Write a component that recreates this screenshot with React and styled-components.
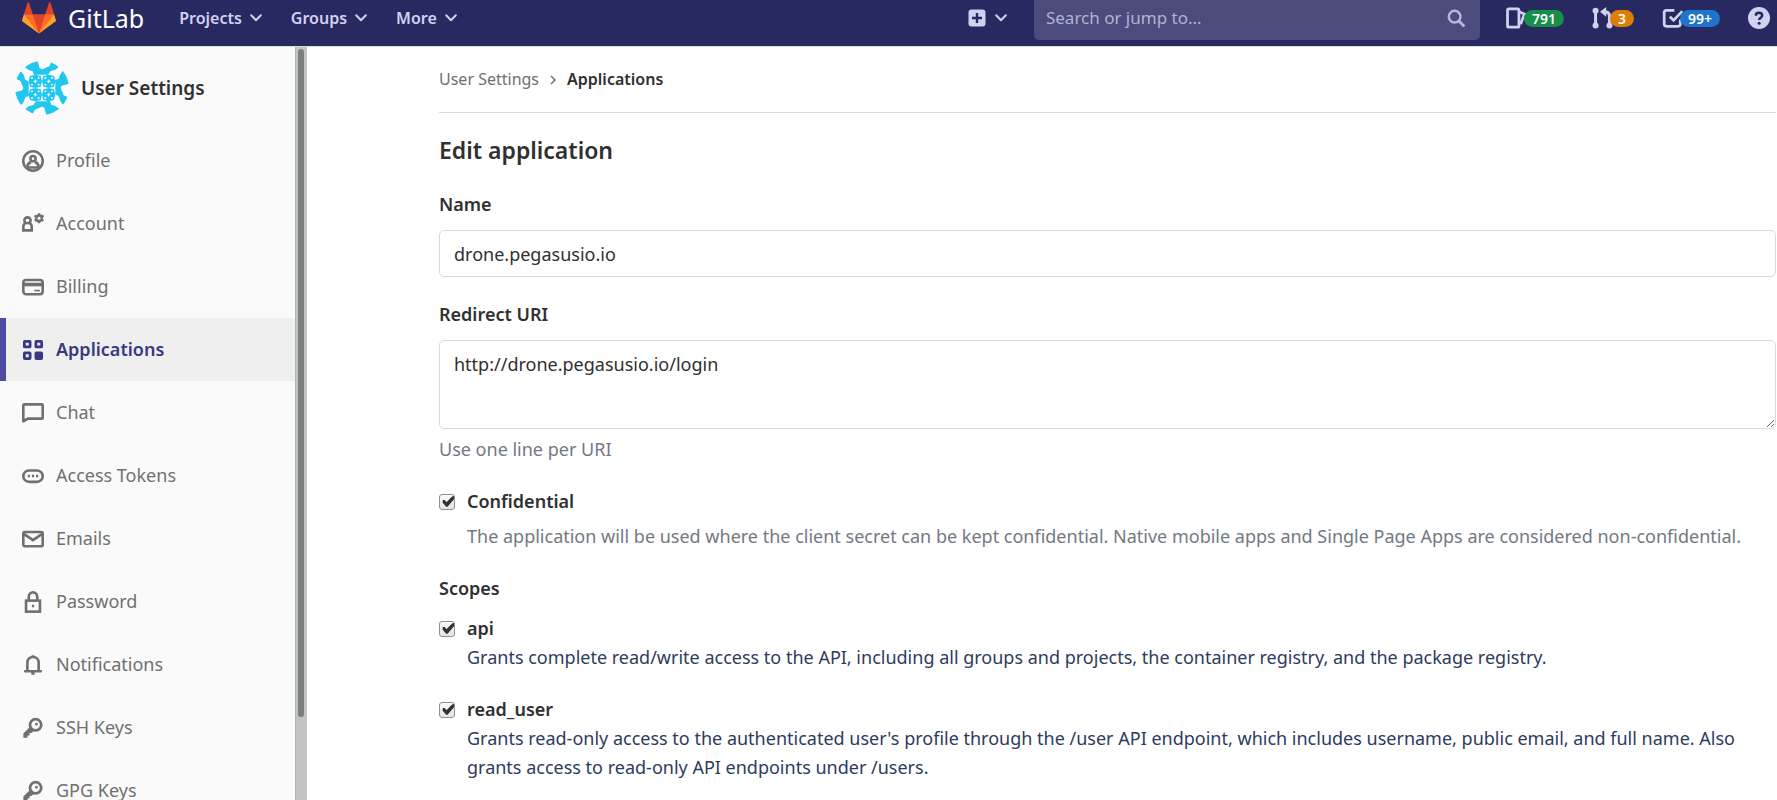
import React from "react";
import styled, { createGlobalStyle } from "styled-components";

const Global = createGlobalStyle`
  *, *::before, *::after { box-sizing: border-box; }
  body {
    margin: 0;
    background: #fff;
    color: #303030;
    font: 400 18px/29px "Noto Sans", sans-serif;
  }
  body, html { overflow: hidden; }
  button, input, textarea { font: inherit; }
`;

const Page = styled.div`
  display: flex;
  flex-direction: column;
  height: 100vh;
`;

/* ---------- Top bar ---------- */

const TopBar = styled.header`
  flex: none;
  display: flex;
  align-items: center;
  height: 47px;
  padding: 0 7px 10px 22px;
  background: #292961;
  border-bottom: 1px solid #dbdbdb;
`;

const Brand = styled.a`
  display: flex;
  align-items: center;
  gap: 12px;
  margin-right: 35px;
  color: #fff;
  font-size: 25px;
  text-decoration: none;
`;

const MainMenu = styled.nav`
  display: flex;
  gap: 29px;
`;

const MenuButton = styled.button`
  display: flex;
  align-items: center;
  gap: 8px;
  padding: 0;
  border: 0;
  background: none;
  color: #d1d1f0;
  font-size: 16px;
  font-weight: 600;
  line-height: 24px;
`;

const Tools = styled.div`
  display: flex;
  align-items: center;
  align-self: flex-start;
  margin-left: auto;
  height: 36px;
`;

const Search = styled.label`
  display: flex;
  align-items: center;
  align-self: flex-start;
  width: 446px;
  height: 40px;
  margin: 0 26px 0 27px;
  padding: 0 15px 4px 12px;
  border-radius: 0 0 5px 5px;
  background: #4c4b7d;
  color: #b8b7dc;
`;

const SearchInput = styled.input`
  flex: 1;
  min-width: 0;
  padding: 0;
  border: 0;
  outline: 0;
  background: none;
  color: inherit;
  font-size: 17px;
  line-height: 24px;
  &::placeholder { color: #b3b2d3; opacity: 1; }
`;

const Counters = styled.div`
  display: flex;
  align-items: center;
  gap: 28px;
`;

const Counter = styled.a`
  display: flex;
  align-items: center;
  color: #d1d1f0;
  text-decoration: none;
`;

const Badge = styled.span`
  margin-left: -4px;
  padding: 0 8px;
  border-radius: 9px;
  background: ${(p) => p.$color};
  color: #fff;
  font-size: 14px;
  font-weight: 600;
  line-height: 17px;
`;

/* ---------- Sidebar ---------- */

const Body = styled.div`
  flex: 1;
  min-height: 0;
  display: flex;
`;

const Sidebar = styled.aside`
  flex: none;
  width: 295px;
  overflow: hidden;
  background: #fafafa;
`;

const SidebarTitle = styled.a`
  display: flex;
  align-items: center;
  gap: 12px;
  height: 82px;
  padding-left: 15px;
  color: #303030;
  font-size: 19px;
  font-weight: 600;
  text-decoration: none;
`;

const SidebarLink = styled.a`
  display: flex;
  align-items: center;
  gap: 12px;
  height: 63px;
  padding-left: 16px;
  border-left: 6px solid ${(p) => (p.$active ? "#4b4ba3" : "transparent")};
  background: ${(p) => (p.$active ? "#efefef" : "none")};
  color: ${(p) => (p.$active ? "#393982" : "#707070")};
  font-weight: ${(p) => (p.$active ? 600 : 400)};
  text-decoration: none;
`;

const ScrollTrack = styled.div`
  flex: none;
  width: 12px;
  padding: 2px 3px 0 2px;
  border-left: 1px solid #b0b5b5;
  background: #c2c4c3;
`;

const ScrollThumb = styled.div`
  height: 89%;
  border-radius: 3px;
  background: #7a7e7e;
`;

/* ---------- Content ---------- */

const Content = styled.main`
  flex: 1;
  min-width: 0;
  overflow: hidden;
  padding: 0 1px 0 132px;
`;

const Breadcrumbs = styled.nav`
  display: flex;
  align-items: center;
  gap: 10px;
  height: 66px;
  border-bottom: 1px solid #dbdbdb;
  font-size: 16px;
  color: #707070;
`;

const Crumb = styled.a`
  color: ${(p) => (p.$current ? "#303030" : "#707070")};
  font-weight: ${(p) => (p.$current ? 600 : 400)};
  text-decoration: none;
`;

const Title = styled.h1`
  margin: 23px 0 25px;
  font-size: 23px;
  font-weight: 600;
  line-height: 29px;
`;

const Field = styled.div`
  display: flex;
  flex-direction: column;
  margin-bottom: 23px;
`;

const FieldLabel = styled.label`
  margin-bottom: 11px;
  font-weight: 600;
`;

const TextInput = styled.input`
  height: 47px;
  padding: 0 14px;
  border: 1px solid #dbdbdb;
  border-radius: 5px;
  background: #fff;
  color: #303030;
`;

const TextArea = styled.textarea`
  height: 89px;
  padding: 9px 14px;
  border: 1px solid #dbdbdb;
  border-radius: 5px;
  background: #fff;
  color: #303030;
`;

const Hint = styled.p`
  margin: 6px 0 0;
  color: #737884;
`;

const Option = styled.div`
  display: grid;
  grid-template-columns: 16px 1fr;
  column-gap: 12px;
  align-items: center;
  margin-bottom: 23px;
  p { grid-column: 2; }
`;

const CheckBox = styled.input`
  appearance: none;
  width: 16px;
  height: 16px;
  margin: 0;
  border: 1px solid #8f9290;
  border-radius: 3px;
  background: linear-gradient(#fafafa, #e4e4e4);
  &:checked::before {
    content: "";
    display: block;
    width: 14px;
    height: 14px;
    background: #2e3436;
    clip-path: polygon(20% 40%, 34% 40%, 46% 56%, 86% 14%, 100% 10%, 100% 34%, 54% 88%, 44% 88%, 18% 58%);
  }
`;

const OptionLabel = styled.label`
  font-weight: 600;
`;

const ScopeText = styled.p`
  margin: 0;
  color: #2e3b5e;
`;

const ScopesHeading = styled.h2`
  margin: 0 0 11px;
  font-size: 18px;
  font-weight: 600;
  line-height: 29px;
`;

/* ---------- Icons ---------- */

const Icon = ({ size = 22, children, ...rest }) => (
  <svg width={size} height={size} viewBox="0 0 16 16" fill="none" stroke="currentColor" strokeWidth="1.9" aria-hidden="true" {...rest}>
    {children}
  </svg>
);

const Chevron = () => (
  <svg width="12" height="8" viewBox="0 0 12 8" fill="none" stroke="currentColor" strokeWidth="2" strokeLinecap="round" strokeLinejoin="round" aria-hidden="true">
    <path d="M1.2 1.2 6 6.2l4.800-5" />
  </svg>
);

const Tanuki = () => (
  <svg width="34" height="34" viewBox="0 0 36 36" aria-hidden="true">
    <path fill="#e24329" d="M2 14l9.380 9v-9l-4-12.280c-.205-.632-1.176-.632-1.380 0zM34 14l-9.380 9v-9l4-12.280c.205-.632 1.176-.632 1.380 0zM18 34.380 3 14h30z" />
    <path fill="#fc6d26" d="M18 34.380 11.380 14H2l4 11zM18 34.380 24.620 14H34l-4 11z" />
    <path fill="#fca326" d="M2 14 .1 20.160c-.18.565 0 1.200.5 1.560L18 34.380zM34 14l1.900 6.160c.18.565 0 1.200-.5 1.560L18 34.380z" />
  </svg>
);

const star = (x, y, r, k) =>
  `M${x} ${y - r}L${x + k} ${y - k}L${x + r} ${y}L${x + k} ${y + k}L${x} ${y + r}L${x - k} ${y + k}L${x - r} ${y}L${x - k} ${y - k}Z`;

const Avatar = () => (
  <svg width="54" height="54" viewBox="9 9 162 162" aria-hidden="true">
    <clipPath id="avatar-round"><circle cx="90" cy="90" r="81" /></clipPath>
    <clipPath id="avatar-core"><path d="M50 50h80v80H50z" /></clipPath>
    <g clipPath="url(#avatar-round)">
      <path fill="#fff" d="M9 9h162v162H9z" />
      {[0, 90, 180, 270].map((a) => (
        <path key={a} fill="#22c7f0" transform={`rotate(${a} 90 90)`} d="M36 26 48 5H76L83 31 90 34 112 25 120 5 144 24 130 35 116 39 108 51H66L62 40 50 36Z" />
      ))}
      <g clipPath="url(#avatar-core)">
        <path fill="#22c7f0" d="M50 50h80v80H50z" />
        <path
          fill="#fff"
          d={[50, 90, 130].flatMap((x) => [50, 90, 130].map((y) => star(x, y, 20, 4))).join("") +
            [70, 110].flatMap((x) => [70, 110].map((y) => star(x, y, 7, 2))).join("") +
            [60, 80, 100, 120].flatMap((x) => [60, 80, 100, 120].map((y) => star(x, y, 3, 2))).join("")}
        />
      </g>
    </g>
  </svg>
);

const Gear = () => (
  <>
    <circle cx="12.4" cy="3.800" r="2" strokeWidth="1.700" />
    <path strokeWidth="1.800" d="M12.400.1v1.500M12.400 6v1.500M9.200 1.950l1.200.7M14.400 4.950l1.200.7M9.200 5.650l1.200-.7M14.400 2.650l1.200-.7" />
  </>
);

const key = (
  <>
    <circle cx="9.900" cy="5.700" r="4.100" strokeWidth="2" />
    <circle cx="10.500" cy="5.200" r="1" fill="currentColor" stroke="none" />
    <path d="M5.700 7.300 1 12v3h3v-1.600h1.500v-1.700h1.400l1.600-1.600z" fill="currentColor" stroke="none" />
  </>
);

const glyphs = {
  profile: (
    <>
      <circle cx="8" cy="8" r="7.100" />
      <circle cx="8" cy="6.300" r="1.900" />
      <path d="M4 13.300V12c0-1.800 1.200-2.800 2.600-3M12 13.300V12c0-1.800-1.200-2.800-2.600-3M4 12.700h8" />
    </>
  ),
  account: (
    <>
      <path d="M2.700 7.300a2.250 2.250 0 1 1 2.600 0M.95 12.600V10A2.600 2.600 0 0 1 3.400 7.300h1.200a2.600 2.600 0 0 1 2.450 2.700v2.600z" />
      <Gear />
    </>
  ),
  billing: (
    <>
      <rect x=".95" y="2.950" width="14.100" height="10.300" rx="2" />
      <path d="M1 6.200h14" strokeWidth="2.600" />
      <path d="M9 10.600h4" strokeWidth="1.200" />
    </>
  ),
  applications: (
    <>
      <rect x="1.700" y="1.700" width="4.200" height="4.100" rx=".4" strokeWidth="2" />
      <rect x="10.100" y="1.700" width="4.200" height="4.100" rx=".4" strokeWidth="2" />
      <rect x="1.700" y="10.100" width="4.200" height="4.100" rx=".4" strokeWidth="2" />
      <rect x="10.100" y="10.100" width="4.200" height="4.100" rx=".4" strokeWidth="2" fill="currentColor" />
    </>
  ),
  chat: <path strokeLinejoin="round" d="M.95 14V2.400c0-.4.300-.7.700-.7h12.700c.4 0 .7.300.7.700v9c0 .4-.3.700-.7.700H4.300z" />,
  token: (
    <>
      <rect x=".95" y="3.950" width="14.100" height="8.300" rx="4.150" />
      <path d="M4.200 8h1.600M7.200 8h1.600M10.200 8h1.600" />
    </>
  ),
  mail: (
    <>
      <rect x=".95" y="2.950" width="14.100" height="10.300" rx="1" />
      <path d="m1.300 4.300 6.700 4.500 6.700-4.500" />
    </>
  ),
  lock: (
    <>
      <rect x="2.950" y="7" width="10.100" height="8" />
      <path d="M4.900 7V4.300a3.100 3.300 0 0 1 6.200 0V7M7.200 10.900h1.600" />
    </>
  ),
  bell: (
    <>
      <path strokeLinejoin="round" d="M2.300 12.500h11.400M3.900 12.300V6.200C3.900 3.800 5.700 2.200 8 2.200s4.100 1.600 4.100 4v6.100" strokeLinecap="round" />
      <path d="M8 .9v1M6.800 14h2.400" strokeWidth="2" />
    </>
  ),
  key,
  issues: (
    <>
      <path d="M2 1.300h6.500c.5 0 .9.400.9.900v11.600c0 .5-.4.900-.9.900H2c-.5 0-.9-.4-.9-.9V2.200c0-.5.400-.9.900-.9z" strokeWidth="2" />
      <path d="m10 3.600 3.400 1.500-2.800 7.400" strokeWidth="2" />
    </>
  ),
  merge: (
    <>
      <path d="M2.600 2.500v11M12.700 13.300V6.700c0-1.900-1-3-3-3" strokeWidth="2.200" />
      <path d="M10.300 0v7L5.800 3.500z" fill="currentColor" stroke="none" />
      <circle cx="2.600" cy="2.700" r="2.200" fill="currentColor" stroke="none" />
      <circle cx="2.600" cy="13.400" r="2.200" fill="currentColor" stroke="none" />
      <circle cx="12.700" cy="13.400" r="2.200" fill="currentColor" stroke="none" />
    </>
  ),
  todo: <path d="M9 2.400H3.200c-.9 0-1.600.7-1.600 1.600v8.400c0 .9.700 1.600 1.600 1.600h8.500c.9 0 1.600-.7 1.600-1.600V9M5.700 7l2.700 2.700L14.800 3" strokeWidth="2" />,
};

const links = [
  ["Profile", "profile"],
  ["Account", "account"],
  ["Billing", "billing"],
  ["Applications", "applications"],
  ["Chat", "chat"],
  ["Access Tokens", "token"],
  ["Emails", "mail"],
  ["Password", "lock"],
  ["Notifications", "bell"],
  ["SSH Keys", "key"],
  ["GPG Keys", "key"],
];

const counters = [
  ["Issues", "issues", "791", "#168f48"],
  ["Merge requests", "merge", "3", "#de7e00"],
  ["To-Do List", "todo", "99+", "#1f75cb"],
];

const scopes = [
  ["api", "Grants complete read/write access to the API, including all groups and projects, the container registry, and the package registry."],
  ["read_user", "Grants read-only access to the authenticated user's profile through the /user API endpoint, which includes username, public email, and full name. Also grants access to read-only API endpoints under /users."],
];

export default function App() {
  return (
    <Page>
      <Global />
      <TopBar>
        <Brand href="#">
          <Tanuki />
          GitLab
        </Brand>
        <MainMenu>
          {["Projects", "Groups", "More"].map((name) => (
            <MenuButton key={name} type="button">
              {name}
              <Chevron />
            </MenuButton>
          ))}
        </MainMenu>
        <Tools>
          <MenuButton type="button" aria-label="New">
            <svg width="20" height="20" viewBox="0 0 20 20" aria-hidden="true">
              <rect x="1.500" y="1.500" width="17" height="17" rx="3" fill="#d1d1f0" />
              <path d="M10 5v10M5 10h10" stroke="#292961" strokeWidth="2.400" />
            </svg>
            <Chevron />
          </MenuButton>
          <Search>
            <SearchInput type="text" placeholder="Search or jump to..." aria-label="Search or jump to" />
            <Icon size={18} strokeWidth="2.200">
              <circle cx="6.800" cy="6.800" r="5.200" />
              <path d="m10.600 10.600 4 4" strokeWidth="2.600" strokeLinecap="round" />
            </Icon>
          </Search>
          <Counters>
            {counters.map(([name, glyph, count, color]) => (
              <Counter key={name} href="#" aria-label={name}>
                <Icon>{glyphs[glyph]}</Icon>
                <Badge $color={color}>{count}</Badge>
              </Counter>
            ))}
            <Counter href="#" aria-label="Help">
              <Icon>
                <circle cx="8" cy="8" r="8" fill="currentColor" stroke="none" />
                <path d="M5.700 6.300C5.700 4.900 6.700 4.200 8 4.200s2.300.8 2.300 2c0 1.600-2.200 1.600-2.200 3.200" stroke="#292961" strokeWidth="1.800" />
                <circle cx="8.100" cy="11.800" r="1.100" fill="#292961" stroke="none" />
              </Icon>
            </Counter>
          </Counters>
        </Tools>
      </TopBar>
      <Body>
        <Sidebar>
          <SidebarTitle href="#">
            <Avatar />
            User Settings
          </SidebarTitle>
          <nav>
            {links.map(([name, glyph]) => (
              <SidebarLink key={name} href="#" $active={name === "Applications"}>
                <Icon>{glyphs[glyph]}</Icon>
                {name}
              </SidebarLink>
            ))}
          </nav>
        </Sidebar>
        <ScrollTrack>
          <ScrollThumb />
        </ScrollTrack>
        <Content>
          <Breadcrumbs>
            <Crumb href="#">User Settings</Crumb>
            <svg width="8" height="10" viewBox="0 0 8 10" fill="none" stroke="currentColor" strokeWidth="1.500" aria-hidden="true">
              <path d="m2 1 4 4-4 4" />
            </svg>
            <Crumb href="#" $current>Applications</Crumb>
          </Breadcrumbs>
          <Title>Edit application</Title>
          <form>
            <Field>
              <FieldLabel htmlFor="name">Name</FieldLabel>
              <TextInput id="name" type="text" defaultValue="drone.pegasusio.io" />
            </Field>
            <Field>
              <FieldLabel htmlFor="redirect">Redirect URI</FieldLabel>
              <TextArea id="redirect" defaultValue="http://drone.pegasusio.io/login" />
              <Hint>Use one line per URI</Hint>
            </Field>
            <Option>
              <CheckBox id="confidential" type="checkbox" defaultChecked />
              <OptionLabel htmlFor="confidential">Confidential</OptionLabel>
              <Hint>
                The application will be used where the client secret can be kept confidential. Native mobile apps and Single Page Apps are considered non-confidential.
              </Hint>
            </Option>
            <ScopesHeading>Scopes</ScopesHeading>
            {scopes.map(([name, text]) => (
              <Option key={name}>
                <CheckBox id={name} type="checkbox" defaultChecked />
                <OptionLabel htmlFor={name}>{name}</OptionLabel>
                <ScopeText>{text}</ScopeText>
              </Option>
            ))}
          </form>
        </Content>
      </Body>
    </Page>
  );
}
